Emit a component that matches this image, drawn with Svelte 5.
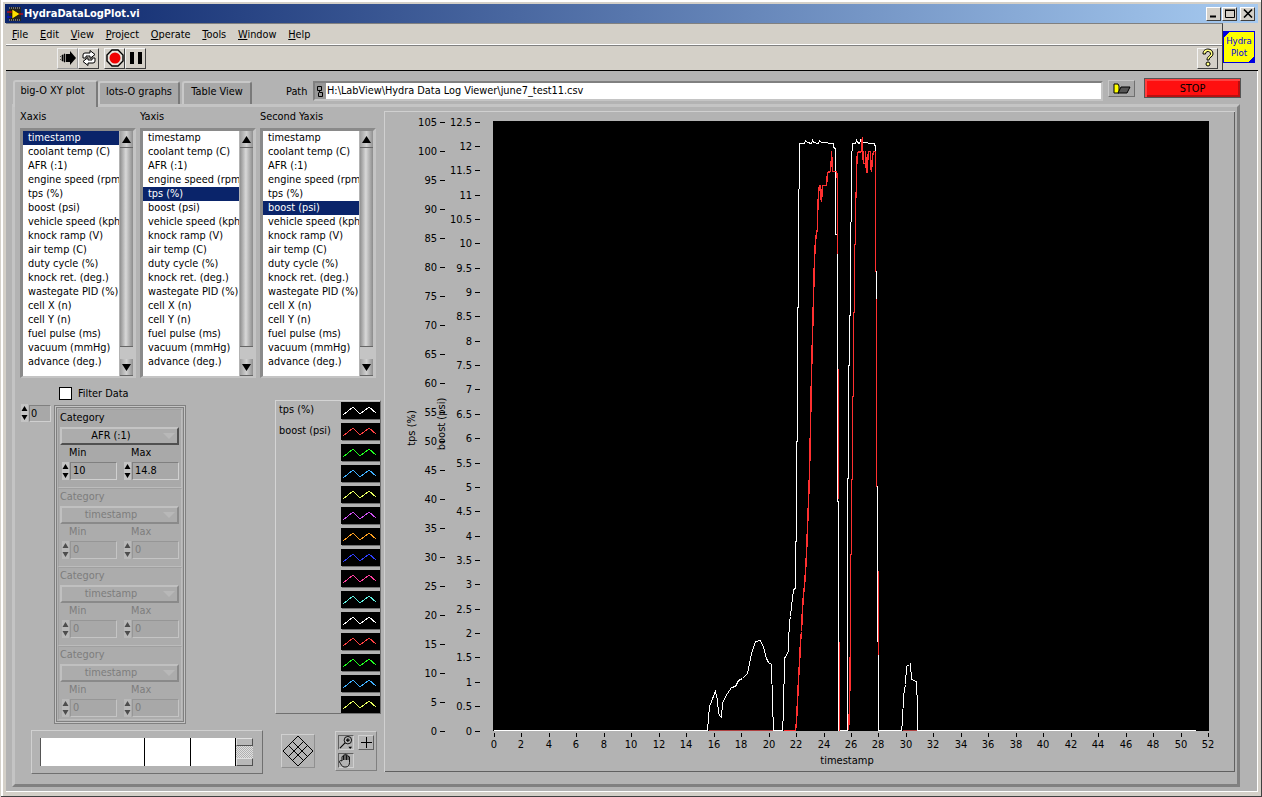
<script>
	const menus = ['File', 'Edit', 'View', 'Project', 'Operate', 'Tools', 'Window', 'Help'];
	const channels = [
		'timestamp', 'coolant temp (C)', 'AFR (:1)', 'engine speed (rpm)', 'tps (%)', 'boost (psi)',
		'vehicle speed (kph)', 'knock ramp (V)', 'air temp (C)', 'duty cycle (%)', 'knock ret. (deg.)',
		'wastegate PID (%)', 'cell X (n)', 'cell Y (n)', 'fuel pulse (ms)', 'vacuum (mmHg)', 'advance (deg.)'
	];
	const lists = [
		{ label: 'Xaxis', selected: 0 },
		{ label: 'Yaxis', selected: 4 },
		{ label: 'Second Yaxis', selected: 5 }
	];
	const filters = [
		{ category: 'AFR (:1)', min: '10', max: '14.8', off: false },
		{ category: 'timestamp', min: '0', max: '0', off: true },
		{ category: 'timestamp', min: '0', max: '0', off: true },
		{ category: 'timestamp', min: '0', max: '0', off: true }
	];
	const legend = [
		{ name: 'tps (%)', color: '#ffffff' },
		{ name: 'boost (psi)', color: '#ff4040' },
		{ color: '#20ff20' }, { color: '#40b0ff' }, { color: '#e8ff60' }, { color: '#d050f0' },
		{ color: '#ffa020' }, { color: '#3040ff' }, { color: '#ff40a0' }, { color: '#60f0e0' },
		{ color: '#ffffff' }, { color: '#ff4040' }, { color: '#20ff20' }, { color: '#40b0ff' }, { color: '#e8ff60' }
	];

	// the svg uses page coordinates, plot runs 493..1209 x 120..730
	const xPos = (v) => Math.round(494 + v * 13.73);
	const xTicks = Array.from({ length: 27 }, (_, i) => i * 2);
	const y1Ticks = Array.from({ length: 22 }, (_, i) => i * 5);
	const y2Ticks = Array.from({ length: 26 }, (_, i) => i * 0.5);
	const y1Pos = (v) => Math.round(729.5 - v * 5.8);
	const y2Pos = (v) => Math.round(729.5 - v * 48.72);

	const whiteLine = [
		[493,729],[707,729],[708,717],[709,705],[711,700],[714,692],[715,690],[717,698],[718,712],[720,715],[721,716],
		[722,702],[725,695],[727,692],[731,686],[735,685],[738,679],[742,677],[747,672],[749,662],[751,652],[755,640],
		[760,639],[763,646],[766,657],[768,661],[771,663],[772,702],[773,729],[782,729],[783,710],[784,657],[788,650],
		[788,640],[789,621],[790,615],[791,605],[792,597],[793,588],[795,587],[795,540],[796,540],[796,440],[797,440],
		[797,306],[798,306],[798,188],[799,187],[799,142],[804,142],[805,139],[807,141],[811,142],[812,139],[813,141],
		[818,142],[819,139],[821,141],[833,142],[833,146],[835,147],[835,233],[837,233],[837,500],[838,500],[838,729],
		[847,729],[847,477],[848,477],[848,364],[849,364],[849,314],[850,314],[850,221],[851,220],[851,150],[852,149],
		[852,142],[855,142],[856,139],[857,141],[859,142],[860,139],[861,141],[874,142],[874,144],[875,144],[875,270],
		[876,270],[876,485],[877,485],[877,640],[878,640],[878,729],[901,729],[902,720],[903,695],[905,683],[906,665],
		[909,663],[910,662],[911,678],[916,680],[917,707],[917,729],[1195,729]
	];
	const redLine = [[708,729],[772,729]];
	const redRise = [
		[783,729],[795,729],[796,720],[797,700],[798,678],[799,662],[800,640],[801,630],[802,607],[803,593],[804,585],[805,570],
		[806,552],[807,527],[808,500],[809,472],[810,425],[811,372],[812,335],[813,296],[814,257],[815,240],[816,232],
		[817,227],[817,214],[818,192],[819,184],[820,184],[820,192],[821,200],[822,184],[826,184],[827,171],[830,170],
		[830,161],[831,160],[831,150],[832,170],[836,170],[837,178],[837,252],[837,252]
	];
	const redFall = [[838,367],[838,497]];
	const redFall2 = [[839,640],[839,729]];
	const redSecond = [
		[848,729],[849,708],[850,640],[850,553],[851,553],[851,478],[852,478],[852,395],[853,395],[853,311],[854,311],
		[854,243],[855,243],[855,200],[856,187],[856,167],[857,151],[861,150],[861,143],[862,136],[862,145],[863,162],
		[865,162],[865,150],[866,171],[867,171],[867,161],[868,150],[870,150],[870,163],[871,170],[872,155],[873,150],
		[875,150],[875,270]
	];
	const redTail = [[876,297],[876,485]];
	const redTail2 = [[878,569],[878,653]];
	const redBase = [[902,729],[916,729]];
	const pts = (line) => line.map(([x, y]) => `${x + 0.5},${y + 0.5}`).join(' ');
</script>

{#snippet spinner()}
	<span class="spin">
		<svg width="7" height="18" viewBox="0 0 7 18"><path d="M3.5 2 L6.5 7 H.5 Z M.5 11 H6.5 L3.5 16 Z" /></svg>
	</span>
{/snippet}

<div class="window">
	<div class="titlebar">
		<svg class="vi-icon" width="16" height="16" viewBox="0 0 16 16">
			<rect x="2" y="1" width="12" height="14" fill="#222" />
			<path d="M2 2 H14 M2 14 H14" stroke="#bbb" stroke-dasharray="1 1" />
			<path d="M5 3 L13 8 L5 13 Z" fill="#ffe000" stroke="#000" stroke-width=".6" />
			<path d="M0 6 H5" stroke="#f00" /><path d="M0 11 H5" stroke="#00f" /><path d="M12 8 H16" stroke="#f00" />
		</svg>
		<span class="title">HydraDataLogPlot.vi</span>
		<div class="caption-btns">
			<button><svg width="10" height="9" viewBox="0 0 10 9"><path d="M1 7.5 H7" stroke="#000" stroke-width="2" /></svg></button>
			<button><svg width="10" height="9" viewBox="0 0 10 9"><path d="M.5 1 H9.5 M.5 .5 V8.5 H9.5 V.5" fill="none" stroke="#000" /><path d="M0 1.5 H10" stroke="#000" /></svg></button>
			<button class="close"><svg width="10" height="9" viewBox="0 0 10 9"><path d="M1 .5 L9 8.5 M9 .5 L1 8.5" stroke="#000" stroke-width="1.6" /></svg></button>
		</div>
	</div>

	<div class="chrome">
		<div class="bars">
			<nav class="menubar">
				{#each menus as m}
					<span><u>{m[0]}</u>{m.slice(1)}</span>
				{/each}
			</nav>
			<div class="toolbar">
				<button class="tool flat">
					<svg width="18" height="16" viewBox="0 0 18 16"><path d="M7 4 H11 V1 L17 8 L11 15 V12 H7 Z" /><path d="M1 6.5 H2 M1 9.5 H2 M3 5 H4 V11 H3 Z M5 4 H6 V12 H5 Z" stroke="#000" fill="#000" stroke-width=".6" /></svg>
				</button>
				<button class="tool">
					<svg width="18" height="18" viewBox="0 0 18 18"><path d="M3 9 V6 Q3 4 5 4 H10 V1.500 L15 5.500 L10 9.500 V7 H6 V9 Z M15 9 V12 Q15 14 13 14 H8 V16.500 L3 12.500 L8 8.500 V11 H12 V9 Z" fill="#fff" stroke="#000" /></svg>
				</button>
				<button class="tool gap">
					<svg width="18" height="18" viewBox="0 0 18 18"><path d="M6 1 H12 L17 6 V12 L12 17 H6 L1 12 V6 Z" fill="#e8e4dc" stroke="#000" stroke-width="1.400" /><circle cx="9" cy="9" r="5.500" fill="#f00000" /></svg>
				</button>
				<button class="tool">
					<svg width="14" height="14" viewBox="0 0 14 14"><path d="M1 1 H5 V13 H1 Z M9 1 H13 V13 H9 Z" /></svg>
				</button>
				<button class="tool help">
					<svg width="16" height="20" viewBox="0 0 16 20"><path d="M3 6 C3 2 6 1 8 1 C11 1 13 3 13 6 C13 9 9 9 9 12 H7 C7 8 10.500 8 10.500 6 C10.500 4 9 3.500 8 3.500 C6.500 3.500 5.500 4.500 5.500 6 Z" fill="#ffff80" stroke="#000" /><circle cx="8" cy="16" r="2" fill="#ffff80" stroke="#000" /></svg>
				</button>
			</div>
		</div>
		<div class="vi-badge">
			<div class="badge-inner">Hydra<br />Plot</div>
		</div>
	</div>

	<div class="panel">
		<div class="top-row">
			<div class="tabs">
				<div class="tab active">big-O XY plot</div>
				<div class="tab t2">lots-O graphs</div>
				<div class="tab t3">Table View</div>
			</div>
			<span class="path-label">Path</span>
			<div class="path">
				<svg width="8" height="11" viewBox="0 0 8 11"><path d="M1.500 .5 H5.500 V4.500 H1.500 Z M3.500 4.500 V6.500 H6.500 V10.500 H2.500 V6.500" fill="none" stroke="#000" /></svg>
				<div class="path-field">H:\LabView\Hydra Data Log Viewer\june7_test11.csv</div>
			</div>
			<button class="folder">
				<svg width="18" height="11" viewBox="0 0 18 11"><path d="M1 1 H5 L6 3 H6 V10 H1 Z" fill="#ffff00" stroke="#000" /><path d="M5 10 L8 4 H17 L14 10 Z" fill="#555" stroke="#000" /></svg>
			</button>
			<button class="stop">STOP</button>
		</div>

		<div class="tab-body">
			<div class="left">
				<div class="lists">
					{#each lists as list}
						<div class="list-wrap">
							<div class="cap">{list.label}</div>
							<div class="listbox">
								<ul>
									{#each channels as c, i}
										<li class:sel={i === list.selected}>{c}</li>
									{/each}
								</ul>
								<div class="vscroll">
									<div class="arrow"><svg width="9" height="7" viewBox="0 0 9 7"><path d="M4.500 0 L9 7 H0 Z" /></svg></div>
									<div class="thumb"></div>
									<div class="track"></div>
									<div class="arrow"><svg width="9" height="7" viewBox="0 0 9 7"><path d="M0 0 H9 L4.500 7 Z" /></svg></div>
								</div>
							</div>
						</div>
					{/each}
				</div>

				<label class="filter"><span class="check"></span>Filter Data</label>

				<div class="mid">
					<div class="index">
						{@render spinner()}
						<span class="index-val">0</span>
					</div>
					<div class="array">
						{#each filters as f}
							<div class="cluster" class:off={f.off}>
								<div class="cat">Category</div>
								<div class="ring">{f.category}<i></i></div>
								<div class="minmax"><span>Min</span><span>Max</span></div>
								<div class="nums">
									{@render spinner()}
									<span class="num">{f.min}</span>
									{@render spinner()}
									<span class="num">{f.max}</span>
								</div>
							</div>
						{/each}
					</div>
					<div class="legend">
						{#each legend as l}
							<div class="leg-row">
								<span class="leg-name">{l.name ?? ''}</span>
								<span class="swatch">
									<svg width="36" height="14" viewBox="0 0 36 14">
										<polyline points="2,11 12,3 19,10 28,3 35,9" fill="none" stroke={l.color} shape-rendering="crispEdges" />
									</svg>
								</span>
							</div>
						{/each}
					</div>
				</div>

				<div class="bottom">
					<div class="palette">
						<div class="pal-field">
							<span class="pal-a"></span><span class="pal-b"></span><span class="pal-c"></span>
						</div>
						<div class="pal-scroll"><b></b><em></em><b></b></div>
					</div>
					<div class="mover">
						<svg width="34" height="34" viewBox="0 0 34 34">
							<path d="M17 2 L32 17 L17 32 L2 17 Z M7.500 11.500 L22.500 26.500 M11.500 7.500 L26.500 22.500 M22.500 7.500 L7.500 22.500 M26.500 11.500 L11.500 26.500" fill="none" stroke="#000" />
						</svg>
					</div>
					<div class="tools">
						<span class="t-btn on">
							<svg width="15" height="15" viewBox="0 0 15 15"><circle cx="9.500" cy="5" r="4" fill="none" stroke="#000" /><path d="M7.500 5 H11.500 M9.500 3 V7 M6.500 8 L1 13.500" stroke="#000" stroke-width="1.200" /><path d="M10 12 H14 L12 14.500 Z" /></svg>
						</span>
						<span class="t-btn plain">
							<svg width="11" height="11" viewBox="0 0 11 11"><path d="M5.500 0 V11 M0 5.500 H11" stroke="#000" /></svg>
						</span>
						<span class="t-btn on">
							<svg width="14" height="15" viewBox="0 0 14 15"><path d="M3 8 V4 C3 3 4.500 3 4.500 4 V2.500 C4.500 1.500 6 1.500 6 2.500 V2 C6 1 7.500 1 7.500 2 V2.500 C7.500 1.800 9 1.800 9 3 V4 C9 3.200 10.500 3.200 10.500 4 V9.500 C10.500 12 9 14 7 14 H5 C3 14 2 11 .5 9 C0 8 1.500 7 3 8 Z M4.500 4 V7 M6 2.500 V7 M7.500 2.500 V7 M9 4 V7" fill="#b3b3b3" stroke="#000" stroke-width=".9" /></svg>
						</span>
					</div>
				</div>
			</div>

			<div class="chart">
				<svg width="851" height="661" viewBox="384 110 851 661">
					<rect x="493" y="120" width="716" height="610" fill="#000" />
					<g shape-rendering="crispEdges" stroke="#000">
						{#each y1Ticks as v}<line x1="440" x2="445" y1={y1Pos(v) + 0.5} y2={y1Pos(v) + 0.5} />{/each}
						{#each y2Ticks as v}<line x1="475" x2="480" y1={y2Pos(v) + 0.5} y2={y2Pos(v) + 0.5} />{/each}
						{#each xTicks as v}<line x1={xPos(v) + 0.5} x2={xPos(v) + 0.5} y1="732" y2="736" />{/each}
					</g>
					<g class="axis">
						{#each y1Ticks as v}<text x="437" y={y1Pos(v) + 4} text-anchor="end">{v}</text>{/each}
						{#each y2Ticks as v}<text x="472" y={y2Pos(v) + 4} text-anchor="end">{v}</text>{/each}
						{#each xTicks as v}<text x={xPos(v)} y="747" text-anchor="middle">{v}</text>{/each}
						<text x="847" y="763" text-anchor="middle">timestamp</text>
						<text transform="translate(415 427) rotate(-90)" text-anchor="middle">tps (%)</text>
						<text transform="translate(445 423) rotate(-90)" text-anchor="middle">boost (psi)</text>
					</g>
					<g fill="none" shape-rendering="crispEdges">
						<polyline points={pts(whiteLine)} stroke="#fff" />
						<polyline points={pts(redLine)} stroke="#b04040" />
						<polyline points={pts(redBase)} stroke="#b04040" />
						<polyline points={pts(redRise)} stroke="#ff3030" stroke-width="1.500" />
						<polyline points={pts(redFall)} stroke="#ff3030" stroke-width="1.500" />
						<polyline points={pts(redFall2)} stroke="#ff3030" stroke-width="1.500" />
						<polyline points={pts(redSecond)} stroke="#ff3030" stroke-width="1.500" />
						<polyline points={pts(redTail)} stroke="#ff3030" stroke-width="1.500" />
						<polyline points={pts(redTail2)} stroke="#ff3030" stroke-width="1.500" />
					</g>
				</svg>
			</div>
		</div>
	</div>
</div>

<style>
	:global(body) {
		margin: 0;
		background: #d4d0c8;
		font-family: 'DejaVu Sans Condensed', 'DejaVu Sans', sans-serif;
		font-stretch: condensed;
		font-size: 10.85px;
		color: #000;
	}

	button {
		padding: 0;
		font: inherit;
		cursor: default;
	}

	.window {
		width: 1262px;
		height: 797px;
		box-sizing: border-box;
		padding: 4px 4px 5px 4px;
		background: #d4d0c8;
		border-left: 1px solid #d4d0c8;
		display: flex;
		flex-direction: column;
		overflow: hidden;
		box-shadow: inset -1px -1px 0 #404040, inset 2px 2px 0 #fff;
	}

	.titlebar {
		height: 19px;
		flex: none;
		background: linear-gradient(90deg, #0a246a, #a6caf0);
		display: flex;
		align-items: center;
		padding-left: 2px;
		color: #fff;
	}

	.vi-icon {
		margin-right: 1px;
	}

	.title {
		font-weight: bold;
		font-size: 11px;
	}

	.caption-btns {
		margin-left: auto;
		display: flex;
		gap: 1px;
		padding-right: 3px;
	}

	.caption-btns button {
		width: 15px;
		height: 14px;
		background: #d4d0c8;
		border: 1px solid;
		border-color: #fff #404040 #404040 #fff;
		display: flex;
		align-items: center;
		justify-content: center;
	}

	.caption-btns .close {
		margin-left: 2px;
	}

	.chrome {
		flex: none;
		height: 47px;
		display: flex;
		border-bottom: 1px solid #000;
		margin-left: 1px;
	}

	.bars {
		flex: 1;
		display: flex;
		flex-direction: column;
		border-top: 1px solid #808080;
		border-right: 1px solid #404040;
	}

	.menubar {
		height: 21px;
		flex: none;
		display: flex;
		align-items: center;
		padding-left: 6px;
		gap: 11.800px;
		border-bottom: 1px solid #808080;
		box-shadow: inset 0 -1px 0 #fff;
	}

	.toolbar {
		flex: 1;
		display: flex;
		align-items: center;
		padding: 0 3px 0 51px;
	}

	.tool {
		width: 21px;
		height: 21px;
		background: #d4d0c8;
		border: 1px solid;
		border-color: #f4f4f4 #404040 #404040 #f4f4f4;
		display: flex;
		align-items: center;
		justify-content: center;
	}

	.tool.flat {
		border-color: #eee #999 #999 #eee;
		background: #cfcbc3;
	}

	.tool.gap {
		margin-left: 5px;
	}

	.tool.help {
		margin-left: auto;
		margin-right: 1px;
	}

	.vi-badge {
		width: 35px;
		flex: none;
		padding: 8px 0 0 0;
		box-sizing: border-box;
	}

	.badge-inner {
		width: 32px;
		height: 32px;
		box-sizing: border-box;
		background:
			linear-gradient(135deg, #0000e0 4px, transparent 4px),
			linear-gradient(315deg, #0000e0 4px, transparent 4px),
			#ffff00;
		border: 1px solid #0000e0;
		color: #0000e0;
		text-align: center;
		font-size: 9.500px;
		line-height: 12px;
		padding-top: 3px;
	}

	.panel {
		flex: 1;
		min-height: 0;
		background: #b3b3b3;
		margin-left: 1px;
		padding: 5px 18px 5px 4px;
		box-shadow: inset -1px -1px 0 #fff;
		display: flex;
		flex-direction: column;
	}

	.top-row {
		height: 28px;
		flex: none;
		display: flex;
		align-items: flex-start;
	}

	.tabs {
		display: flex;
		align-items: flex-end;
		height: 28px;
		margin-left: 3px;
		position: relative;
		z-index: 1;
	}

	.tab {
		box-sizing: border-box;
		height: 23px;
		line-height: 18px;
		text-align: center;
		background: #a8a8a8;
		border: 2px solid;
		border-color: #c8c8c8 #7a7a7a transparent #c8c8c8;
		border-bottom: none;
		border-radius: 3px 3px 0 0;
		width: 82px;
	}

	.tab.active {
		background: #b3b3b3;
		height: 27px;
		width: 85px;
		margin-bottom: -3px;
		padding-right: 6px;
	}

	.tab.t3 {
		width: 70px;
		margin-left: 2px;
	}

	.path-label {
		margin: 9px 0 0 34px;
		width: 23px;
		flex: none;
	}

	.path {
		margin: 5px 0 0 4px;
		width: 790px;
		flex: none;
		height: 20px;
		box-sizing: border-box;
		background: #989898;
		border: 2px solid;
		border-color: #808080 #c4c4c4 #c4c4c4 #808080;
		display: flex;
		align-items: center;
		padding-left: 1px;
		gap: 2px;
	}

	.path-field {
		flex: 1;
		background: #fff;
		height: 16px;
		line-height: 16px;
		padding-left: 1px;
	}

	.folder {
		margin: 4px 0 0 5px;
		width: 27px;
		height: 17px;
		flex: none;
		background: #a8a8a8;
		border: 1px solid;
		border-color: #c8c8c8 #707070 #707070 #c8c8c8;
		display: flex;
		align-items: center;
		justify-content: center;
	}

	.stop {
		margin: 2px 0 0 9px;
		width: 97px;
		height: 20px;
		flex: none;
		background: #ff1010;
		border: 1px solid #555;
		box-shadow: inset 2px 2px 0 #ff4040, inset -2px -2px 0 #b81010;
	}

	.tab-body {
		flex: 1;
		min-height: 0;
		box-sizing: border-box;
		border: 3px solid;
		border-color: #c4c4c4 #808080 #808080 #c4c4c4;
		padding: 4px 2px 13px 5px;
		display: flex;
		margin-left: 2px;
	}

	.left {
		width: 364px;
		flex: none;
		display: flex;
		flex-direction: column;
	}

	.lists {
		display: flex;
		gap: 4px;
	}

	.list-wrap {
		width: 116px;
	}

	.cap {
		height: 12px;
		line-height: 12px;
		margin-bottom: 5px;
	}

	.listbox {
		height: 250px;
		box-sizing: border-box;
		border: 3px solid;
		border-color: #8a8a8a #c4c4c4 #c4c4c4 #8a8a8a;
		border-bottom-width: 2px;
		display: flex;
	}

	.listbox ul {
		width: 96px;
		flex: none;
		margin: 0;
		padding: 0;
		list-style: none;
		background: #fff;
		overflow: hidden;
	}

	.listbox li {
		height: 14px;
		line-height: 13px;
		padding-left: 5px;
		white-space: nowrap;
	}

	.listbox li.sel {
		background: #0a246a;
		color: #fff;
	}

	.vscroll {
		flex: 1;
		display: flex;
		flex-direction: column;
		padding-left: 1px;
	}

	.arrow {
		height: 17px;
		flex: none;
		box-sizing: border-box;
		background: linear-gradient(90deg, #a0a0a0, #d0d0d0 50%, #909090);
		display: flex;
		align-items: center;
		justify-content: center;
		border-bottom: 1px solid #666;
	}

	.thumb {
		height: 198px;
		flex: none;
		background: linear-gradient(90deg, #909090, #d8d8d8 45%, #8c8c8c);
		border-bottom: 1px solid #666;
	}

	.track {
		flex: 1;
		background: #c4c4c4;
	}

	.filter {
		margin: 9px 0 0 39px;
		height: 13px;
		display: flex;
		align-items: center;
	}

	.check {
		width: 11px;
		height: 11px;
		background: #fff;
		border: 1px solid #000;
		margin-right: 6px;
	}

	.mid {
		height: 330px;
		flex: none;
		display: flex;
		align-items: flex-start;
	}

	.index {
		margin: 4px 0 0 1px;
		width: 30px;
		display: flex;
		align-items: center;
		gap: 1px;
	}

	.index-val {
		flex: 1;
		height: 15px;
		line-height: 15px;
		background: #a8a8a8;
		border: 1px solid;
		border-color: #808080 #d0d0d0 #d0d0d0 #808080;
		padding-left: 1px;
	}

	.spin {
		display: flex;
		width: 7px;
		height: 18px;
		background: #c4c4c4;
		flex: none;
	}

	.array {
		margin: 5px 0 0 3px;
		width: 132px;
		height: 319px;
		box-sizing: border-box;
		border: 3px solid #808080;
		outline: 1px solid #c4c4c4;
		outline-offset: -2px;
		padding: 1px;
		display: flex;
		flex-direction: column;
	}

	.cluster {
		height: 79px;
		box-sizing: border-box;
		flex: none;
		background: #a9a9a9;
		border: 1px solid;
		border-color: #a0a0a0 #bcbcbc #bcbcbc #a0a0a0;
		padding: 1px 1px 0;
	}

	.cluster:last-child {
		height: 74px;
	}

	.cluster.off {
		color: #7d7d7d;
		background: #acacac;
	}

	.cat {
		height: 13px;
		line-height: 13px;
	}

	.ring {
		margin: 3px 1px 0 0;
		height: 18px;
		box-sizing: border-box;
		background: #acacac;
		border: 2px solid;
		border-color: #c4c4c4 #505050 #505050 #c4c4c4;
		padding-right: 17px;
		text-align: center;
		line-height: 14px;
		position: relative;
	}

	.cluster.off .ring {
		border-color: #c0c0c0 #8a8a8a #8a8a8a #c0c0c0;
	}

	.ring i {
		position: absolute;
		right: 2px;
		top: 4px;
		border: 6px solid transparent;
		border-top-color: #b8b8b8;
		border-bottom: none;
	}

	.minmax {
		display: flex;
		height: 13px;
		line-height: 13px;
		margin-top: 1px;
		padding-left: 9px;
	}

	.minmax span:first-child {
		width: 62px;
	}

	.nums {
		display: flex;
		align-items: center;
		margin-top: 3px;
		padding-left: 2px;
		gap: 1px;
	}

	.num {
		width: 47px;
		height: 18px;
		box-sizing: border-box;
		line-height: 16px;
		padding-left: 2px;
		background: #a8a8a8;
		border: 1px solid;
		border-color: #808080 #d0d0d0 #d0d0d0 #808080;
	}

	.num + .spin {
		margin-left: 6px;
	}

	.cluster.off .spin {
		opacity: 0.55;
	}

	.cluster.off .num {
		border-color: #969696 #c4c4c4 #c4c4c4 #969696;
	}

	.legend {
		margin-left: 89px;
		width: 106px;
		height: 314px;
		box-sizing: border-box;
		border: 1px solid;
		border-color: #d4d4d4 #707070 #707070 #d4d4d4;
		padding: 1px 0 0 3px;
		display: flex;
		flex-direction: column;
		gap: 4px;
	}

	.leg-row {
		display: flex;
		height: 17px;
		flex: none;
		line-height: 15px;
	}

	.leg-name {
		width: 62px;
	}

	.swatch {
		width: 39px;
		height: 17px;
		background: #000;
		box-shadow: 1px 1px 0 #707070;
		display: flex;
		align-items: center;
	}

	.bottom {
		display: flex;
		align-items: flex-start;
	}

	.palette {
		margin-left: 11px;
		width: 232px;
		height: 44px;
		box-sizing: border-box;
		border: 1px solid;
		border-color: #d0d0d0 #707070 #707070 #d0d0d0;
		padding: 7px 8px 7px 8px;
		display: flex;
	}

	.pal-field {
		width: 196px;
		background: #fff;
		border-left: 1px solid #555;
		display: flex;
		box-sizing: border-box;
	}

	.pal-a { width: 103px; border-right: 1px solid #000; }
	.pal-b { width: 45px; border-right: 1px solid #000; }
	.pal-c { flex: 1; border-right: 1px solid #000; }

	.pal-scroll {
		width: 17px;
		display: flex;
		flex-direction: column;
	}

	.pal-scroll b {
		display: block;
		height: 6px;
		background: #b8b8b8;
		border: 1px solid;
		border-color: #e0e0e0 #505050 #505050 #e0e0e0;
	}

	.pal-scroll em {
		flex: 1;
		background: repeating-conic-gradient(#e0e0e0 0 25%, #b0b0b0 0 50%) 0 0 / 2px 2px;
	}

	.mover {
		margin: 4px 0 0 18px;
		width: 34px;
		height: 34px;
		border: 1px solid;
		border-color: #d0d0d0 #909090 #909090 #d0d0d0;
		box-sizing: border-box;
		overflow: hidden;
	}

	.mover svg {
		margin: -1px;
		display: block;
	}

	.tools {
		margin: 1px 0 0 20px;
		width: 42px;
		height: 40px;
		box-sizing: border-box;
		border: 1px solid;
		border-color: #d0d0d0 #808080 #808080 #d0d0d0;
		padding: 3px 2px;
		display: grid;
		grid-template-columns: 16px 16px;
		column-gap: 4px;
		row-gap: 3px;
		align-content: start;
	}

	.t-btn {
		width: 16px;
		height: 15px;
		display: flex;
		align-items: center;
		justify-content: center;
		border: 1px solid;
		box-sizing: border-box;
		border-color: #606060 #d0d0d0 #d0d0d0 #606060;
	}

	.t-btn.plain {
		border-color: #d0d0d0 #606060 #606060 #d0d0d0;
	}

	.chart {
		width: 851px;
		height: 661px;
		flex: none;
		box-shadow: inset 1px 1px 0 #d0d0d0, inset -1px -1px 0 #606060;
	}

	.chart svg {
		display: block;
	}

	.axis text {
		font-size: 11px;
		fill: #000;
	}
</style>
